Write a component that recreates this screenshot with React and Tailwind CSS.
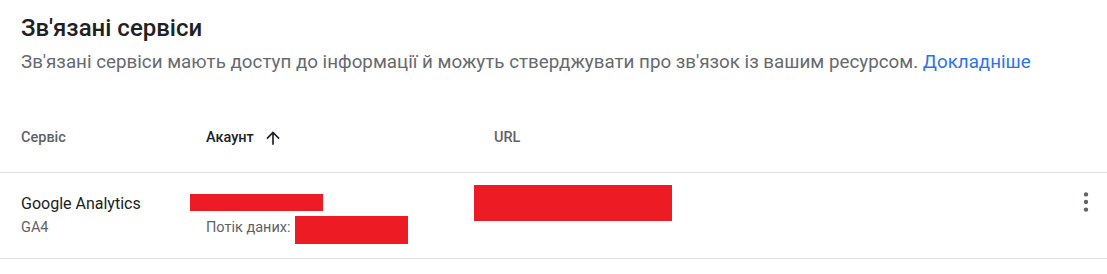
import React from "react";

function ArrowUp() {
  return (
    <svg width="20" height="20" viewBox="0 0 24 24" className="fill-[#202124]">
      <path d="M4 12l1.41 1.41L11 7.83V20h2V7.83l5.58 5.59L20 12l-8-8-8 8z" />
    </svg>
  );
}

function MoreIcon() {
  return (
    <svg width="26" height="26" viewBox="0 0 24 24" className="fill-[#5f6368]">
      <circle cx="12" cy="5" r="2" />
      <circle cx="12" cy="12" r="2" />
      <circle cx="12" cy="19" r="2" />
    </svg>
  );
}

export default function App() {
  return (
    <div className="w-[1107px] h-[274px] bg-white overflow-hidden font-['Roboto',sans-serif]">
      <div className="pl-[21px] pt-[12px]">
        <h1 className="text-[24px] leading-[32px] font-medium text-[#202124]">
          Зв'язані сервіси
        </h1>
        <p className="mt-[5px] text-[18.8px] leading-[26px] text-[#666a6e]">
          Зв'язані сервіси мають доступ до інформації й можуть стверджувати про зв'язок із вашим ресурсом.{" "}
          <a href="#" className="text-[#2f74e6]">Докладніше</a>
        </p>
      </div>

      <div className="mt-[28px] h-[70px] flex items-center pl-[21px] text-[14.5px] font-medium border-b border-[#e0e0e0]">
        <div className="w-[185px] text-[#5f6368]">Сервіс</div>
        <div className="w-[288px] flex items-center gap-[9px] text-[#202124]">
          <span>Акаунт</span>
          <ArrowUp />
        </div>
        <div className="text-[#5f6368]">URL</div>
      </div>

      <div className="h-[86px] flex items-center pl-[21px] border-b border-[#e0e0e0]">
        <div className="w-[185px]">
          <div className="text-[16px] leading-[25px] text-[#202124]">Google Analytics</div>
          <div className="text-[14.5px] leading-[24px] text-[#5f6368]">GA4</div>
        </div>
        <div className="w-[288px] relative">
          <div className="text-[16px] leading-[25px] text-[#202124]">&nbsp;</div>
          <div className="text-[14.5px] leading-[24px] text-[#5f6368] flex items-center">
            <span>Потік даних:</span>
          </div>
          <div className="absolute left-[-16px] top-[3px] w-[133px] h-[17px] bg-[#ed1c24]" />
          <div className="absolute left-[89px] top-[25px] w-[113px] h-[28px] bg-[#ed1c24]" />
        </div>
        <div className="flex-1 relative self-stretch">
          <div className="absolute left-[-20px] top-[12px] w-[198px] h-[36px] bg-[#ed1c24]" />
        </div>
        <button className="w-[40px] h-[40px] mr-[1px] mb-[28px] flex items-center justify-center">
          <MoreIcon />
        </button>
      </div>
    </div>
  );
}
